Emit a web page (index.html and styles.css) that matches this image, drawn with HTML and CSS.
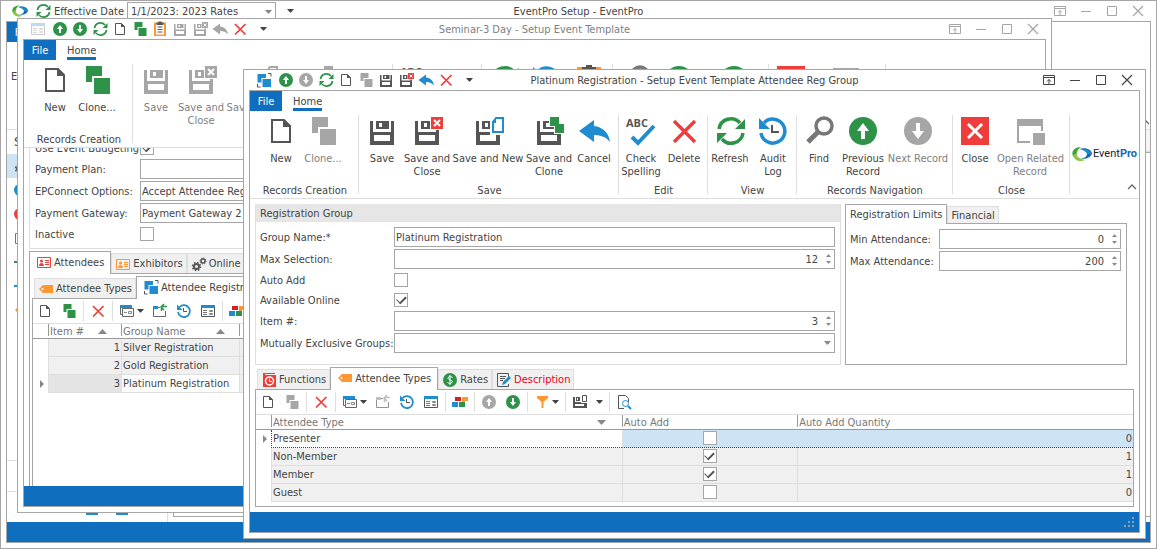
FILE: index.html
```html
<!DOCTYPE html>
<html lang="en">
<head>
<meta charset="utf-8">
<title>EventPro Setup - EventPro</title>
<link rel="stylesheet" href="styles.css">
</head>
<body>
<svg class="sprite" aria-hidden="true">
  <symbol id="new" viewBox="0 0 32 32"><path d="M7 5h12l6 6v16H7z" fill="none" stroke="currentColor" stroke-width="2"/><path d="M18 4v8h8z" fill="currentColor"/></symbol>
  <symbol id="clone" viewBox="0 0 32 32"><path d="M5 2h16v10H11v6H5z" fill="currentColor"/><path d="M13 14h16v16H13z" fill="currentColor"/></symbol>
  <symbol id="save" viewBox="0 0 32 32"><path fill-rule="evenodd" d="M4 6h3v11h18V6h3v24H4zM8 20v6h16v-6zM10 6h13v8H10zM13 8v4h3V8z" fill="currentColor"/></symbol>
  <symbol id="saveclose" viewBox="0 0 32 32"><path fill-rule="evenodd" d="M4 6h3v11h18V6h3v24H4zM8 20v6h16v-6zM10 6h13v8H10zM13 8v4h3V8z" fill="currentColor"/><path d="M19 0h13v15H19z" fill="#fff"/><path d="M20 2h12v12H20z" fill="var(--accent)"/><path d="M23 5l6 6M29 5l-6 6" stroke="#fff" stroke-width="2"/></symbol>
  <symbol id="savenew" viewBox="0 0 32 32"><path fill-rule="evenodd" d="M4 6h3v11h18V6h3v24H4zM8 20v6h16v-6zM10 6h13v8H10zM13 8v4h3V8z" fill="currentColor"/><path d="M18 0h14v20H18z" fill="#fff"/><path d="M24 3h7v14H21V7z" fill="#fff" stroke="var(--accent)" stroke-width="2"/><path d="M20 7l4-4v5h-4z" fill="var(--accent)"/></symbol>
  <symbol id="saveclone" viewBox="0 0 32 32"><path fill-rule="evenodd" d="M4 6h3v11h18V6h3v24H4zM8 20v6h16v-6zM10 6h13v8H10zM13 8v4h3V8z" fill="currentColor"/><path d="M16 0h16v19H21v-7h-5z" fill="#fff"/><path d="M17 2h9v7h-4v2h-5zM22 9h9v9h-9z" fill="var(--accent)"/></symbol>
  <symbol id="cancel" viewBox="0 0 32 32"><path d="M1 16L16 5v6c9 1 15 7 16 16-4-5-9-7-16-7v7z" fill="currentColor"/></symbol>
  <symbol id="spell" viewBox="0 0 32 32"><text x="1" y="12" class="abc">ABC</text><path d="M7 22l6 6L29 11" fill="none" stroke="#1f8bd0" stroke-width="4"/></symbol>
  <symbol id="delete" viewBox="0 0 32 32"><path d="M6 6l21 21M27 6L6 27" stroke="currentColor" stroke-width="3.400"/></symbol>
  <symbol id="refresh" viewBox="0 0 32 32"><path d="M5 14A12 12 0 0 1 26 8M29 18A12 12 0 0 1 8 24" fill="none" stroke="currentColor" stroke-width="3.500"/><path d="M31 4v10H21zM3 28V18h10z" fill="currentColor"/></symbol>
  <symbol id="history" viewBox="0 0 32 32"><path d="M4 18a12 12 0 1 0 3-10" fill="none" stroke="#1f8bd0" stroke-width="3.500"/><path d="M2 3v11h11z" fill="#1f8bd0"/><path d="M15 10v7h7" fill="none" stroke="#555" stroke-width="2"/></symbol>
  <symbol id="find" viewBox="0 0 32 32"><circle cx="21" cy="11" r="8" fill="none" stroke="#777" stroke-width="3.500"/><path d="M15 17L5 27" stroke="#777" stroke-width="5"/></symbol>
  <symbol id="up" viewBox="0 0 32 32"><circle cx="16" cy="16" r="14" fill="currentColor"/><path d="M16 8l6 8h-4v8h-4v-8h-4z" fill="#fff"/></symbol>
  <symbol id="down" viewBox="0 0 32 32"><circle cx="16" cy="16" r="14" fill="currentColor"/><path d="M16 24l6-8h-4V8h-4v8h-4z" fill="#fff"/></symbol>
  <symbol id="close" viewBox="0 0 32 32"><path d="M2 2h28v28H2z" fill="#ee3d3a"/><path d="M9 9l14 14M23 9L9 23" stroke="#fff" stroke-width="3"/></symbol>
  <symbol id="related" viewBox="0 0 32 32"><path d="M3 4h26v12h-2v-5H5v15h11v2H3z" fill="currentColor"/><path d="M19 18h12v12H19z" fill="currentColor"/></symbol>
  <symbol id="paste" viewBox="0 0 32 32"><path d="M4 3h24v27H4z" fill="#ff9634"/><path d="M8 6h16v21H8z" fill="#fff"/><path d="M9 3h4V1h6v2h4v5H9z" fill="#555"/><path d="M11 12h10M11 17h10M11 22h10" stroke="#555" stroke-width="2"/></symbol>
  <symbol id="group" viewBox="0 0 32 32"><path d="M3 4h17v8h-9v9H3zM13 14h17v16H13z" fill="#1f8bd0"/><path d="M24 3h6v6M3 24v6h6" fill="none" stroke="#555" stroke-width="2"/></symbol>
  <symbol id="form" viewBox="0 0 16 16"><path d="M1.500 4.500h13v9h-13z" fill="none" stroke="#555"/><path d="M1 2h14v3H1z" fill="#1f8bd0"/><path d="M3 7.500h4M3 9.500h4M3 11.500h4" stroke="#777"/><path d="M9.500 7.500h3v1h-3zM9.500 10.500h3v1h-3z" fill="none" stroke="#888"/></symbol>
  <symbol id="views" viewBox="0 0 16 16"><path d="M1 2h12v3H1z" fill="#1f8bd0"/><path d="M1.500 4v7.500H3M3.500 5.500h11v8h-11z" fill="none" stroke="#666"/><path d="M9.500 8.500h3v2h-3zM5 9.500h3" fill="none" stroke="#888"/></symbol>
  <symbol id="export" viewBox="0 0 16 16"><path d="M8 4.500H1.500v9h12V8" fill="none" stroke="#666"/><path d="M1 3h5v3H1z" fill="var(--bar)"/><path d="M9.500 8V3.500H15M12 1l-3 3 3 3" fill="none" stroke="var(--arrow)" stroke-width="1.500"/></symbol>
  <symbol id="blocks" viewBox="0 0 16 16"><path d="M3 3h6v4H3z" fill="#d42020"/><path d="M10 3h6v4h-3v3h-3z" fill="#ff9634"/><path d="M0 8h6v5H0z" fill="#1f8bd0"/><path d="M7 8h6v5H7z" fill="#2e9249"/></symbol>
  <symbol id="filter" viewBox="0 0 16 16"><path d="M3 2h11v2L9.500 8v6h-2V8L3 4z" fill="#ff9634"/></symbol>
  <symbol id="layout" viewBox="0 0 16 16"><path fill-rule="evenodd" d="M1 3h2v5h6v1h6v5H1zM3 10v2h9v-2zM4 3h4v4H4zM5 4v2h1V4z" fill="#555"/><path d="M10.500 1.500h4v6h-4z" fill="#fff" stroke="#555"/></symbol>
  <symbol id="preview" viewBox="0 0 16 16"><path d="M12.500 8V4.500l-3-3h-7v13H8" fill="none" stroke="#555"/><circle cx="9.500" cy="9.500" r="3" fill="#fff" stroke="#1f8bd0"/><path d="M12 12l3 3" stroke="#1f8bd0" stroke-width="2"/></symbol>
  <symbol id="tag" viewBox="0 0 16 16"><path d="M1 8l4-4h10v8H5z" fill="#ff9634"/><circle cx="4.500" cy="8" r="1" fill="#fff"/></symbol>
  <symbol id="card" viewBox="0 0 16 16"><path d="M1.500 3.500h13v10h-13z" fill="none" stroke="currentColor"/><circle cx="5.500" cy="7" r="1.500" fill="currentColor"/><path d="M3 12c0-4 5-4 5 0z" fill="currentColor"/><path d="M9 6.500h4M9 8.500h4M9 10.500h4" stroke="currentColor"/></symbol>
  <symbol id="gears" viewBox="0 0 16 16"><circle cx="5.500" cy="10.500" r="2.500" fill="none" stroke="#555" stroke-width="2"/><circle cx="5.500" cy="10.500" r="4" fill="none" stroke="#555" stroke-width="1.500" stroke-dasharray="1.600 1.542"/><circle cx="12" cy="5" r="2" fill="none" stroke="#555" stroke-width="1.500"/><circle cx="12" cy="5" r="3" fill="none" stroke="#555" stroke-dasharray="1.200 1.156"/></symbol>
  <symbol id="functions" viewBox="0 0 16 16"><path d="M2 1h12v1H4v1h11v12H2z" fill="#ee3d3a"/><circle cx="8.500" cy="9" r="4" fill="none" stroke="#fff" stroke-width="1.500"/><path d="M8.500 6.500v3H11" fill="none" stroke="#fff"/></symbol>
  <symbol id="dollar" viewBox="0 0 16 16"><circle cx="8" cy="8" r="7" fill="#2e9249"/><path d="M10.500 5.500C9 4 5.800 4.500 6 6.300S10.300 8 10.300 9.700 7 12 5.500 10.500M8 3v10" fill="none" stroke="#fff"/></symbol>
  <symbol id="note" viewBox="0 0 16 16"><path d="M12.500 5V1.500h-11v13h11V12" fill="none" stroke="#555"/><path d="M4 4.500h6M4 6.500h5M4 8.500h3" stroke="#555"/><path d="M6 13l1-3 6-6 2 2-6 6z" fill="#1f8bd0"/></symbol>
  <symbol id="arrow" viewBox="0 0 7 4"><path d="M0 0h7L4 3.500H3z" fill="currentColor"/></symbol>
  <symbol id="sortup" viewBox="0 0 9 5"><path d="M4.500 0L9 5H0z" fill="#888"/></symbol>
  <symbol id="swoosh" viewBox="0 0 20 16"><path d="M9 1C-2 1-3 13 9 15 3 12 3 5 9 1z" fill="#3fa535"/><path d="M1 9c1 5 5 6 9 6l3-1C8 13 5 11 4 8z" fill="#8fc742"/><path d="M8 3c6-2 12 1 12 5-2 4-6 5-11 5 4-1 6-3 6-5S12 4 8 3z" fill="#1668b3"/><path d="M8 3c6-1 10 2 12 5h-5c0-2-3-4-7-5z" fill="#1f8bd0"/></symbol>
  <symbol id="wpin" viewBox="0 0 12 12"><path d="M.5 1.500h11v9H.5zM0 3.500h12M6 10V5.500M4 7.500l2-2 2 2" fill="none" stroke="currentColor"/></symbol>
  <symbol id="wmin" viewBox="0 0 12 12"><path d="M1 6.500h10" stroke="currentColor"/></symbol>
  <symbol id="wmax" viewBox="0 0 12 12"><path d="M1.500 1.500h9v9h-9z" fill="none" stroke="currentColor"/></symbol>
  <symbol id="wclose" viewBox="0 0 12 12"><path d="M1 1l10 10M11 1L1 11" stroke="currentColor" stroke-width="1.200"/></symbol>
  <symbol id="chevron" viewBox="0 0 10 6"><path d="M1 5l4-4 4 4" fill="none" stroke="#666" stroke-width="1.300"/></symbol>
  <symbol id="rowmark" viewBox="0 0 4 8"><path d="M0 0l4 4-4 4z" fill="#888"/></symbol>
  <symbol id="grip" viewBox="0 0 10 10"><path d="M8 0h2v2H8zM8 4h2v2H8zM4 4h2v2H4zM0 8h2v2H0zM4 8h2v2H4zM8 8h2v2H8z" fill="#8c9caf"/></symbol>
</svg>

<section class="window win-setup">
  <header class="titlebar">
    <div class="qat">
      <svg class="i16 app"><use href="#swoosh"/></svg>
      <svg class="i16 green"><use href="#refresh"/></svg>
      <label for="effective">Effective Date</label>
      <span class="select-wrap date"><select id="effective"><option>1/1/2023: 2023 Rates</option></select><svg class="caret"><use href="#arrow"/></svg></span>
      <svg class="caret dark more"><use href="#arrow"/></svg>
    </div>
    <h1 class="title">EventPro Setup - EventPro</h1>
    <div class="winbtns gray">
      <button aria-label="Pin"><svg><use href="#wpin"/></svg></button><button aria-label="Minimize"><svg><use href="#wmin"/></svg></button><button aria-label="Maximize"><svg><use href="#wmax"/></svg></button><button aria-label="Close"><svg><use href="#wclose"/></svg></button>
    </div>
  </header>
  <div class="frame">
    <div class="tabstrip"><button class="file">File</button></div>
    <div class="setup-ribbon"><span>E</span><svg class="chev"><use href="#chevron"/></svg></div>
    <div class="setup-main">
      <nav class="side">
        <div class="side-head">S</div>
        <ul>
          <li class="on"><svg class="i16"><use href="#gears"/></svg></li>
          <li><span class="dot blue-bg"></span></li>
          <li><span class="dot red-bg"></span></li>
          <li><svg class="i16 blue"><use href="#card"/></svg></li>
          <li><span class="bar green-bg"></span></li>
          <li><span class="bar blue-bg"></span></li>
          <li><svg class="i16"><use href="#tag"/></svg></li>
        </ul>
        <div class="side-row"></div>
        <div class="side-row icons"><span class="bar blue-bg"></span><span class="bar blue-bg"></span></div>
      </nav>
      <div class="setup-pane"><div class="setup-head"></div><div class="setup-box"></div></div>
    </div>
    <footer class="status"></footer>
  </div>
</section>

<section class="window win-template">
  <header class="titlebar">
    <div class="qat">
      <svg class="i16 app faint"><use href="#form"/></svg>
      <svg class="i16 green"><use href="#up"/></svg>
      <svg class="i16 green"><use href="#down"/></svg>
      <svg class="i16 green"><use href="#refresh"/></svg>
      <svg class="i16 dark"><use href="#new"/></svg>
      <svg class="i16 green"><use href="#clone"/></svg>
      <svg class="i16"><use href="#paste"/></svg>
      <svg class="i16 gray"><use href="#save"/></svg>
      <svg class="i16 gray"><use href="#saveclose"/></svg>
      <svg class="i16 gray"><use href="#cancel"/></svg>
      <svg class="i16 red"><use href="#delete"/></svg>
      <svg class="caret dark more"><use href="#arrow"/></svg>
    </div>
    <h1 class="title dim">Seminar-3 Day - Setup Event Template</h1>
    <div class="winbtns gray">
      <button aria-label="Pin"><svg><use href="#wpin"/></svg></button><button aria-label="Minimize"><svg><use href="#wmin"/></svg></button><button aria-label="Maximize"><svg><use href="#wmax"/></svg></button><button aria-label="Close"><svg><use href="#wclose"/></svg></button>
    </div>
  </header>
  <div class="frame">
    <div class="tabstrip"><button class="file">File</button><button class="home">Home</button></div>
    <div class="ribbon">
      <div class="rgroup g-create"><div class="rbtns">
        <button class="rb w42"><svg class="dark"><use href="#new"/></svg>New</button>
        <button class="rb w42"><svg class="green"><use href="#clone"/></svg>Clone...</button>
      </div><div class="cap">Records Creation</div></div>
      <div class="rgroup g-save"><div class="rbtns">
        <button class="rb w44" disabled><svg><use href="#save"/></svg>Save</button>
        <button class="rb w46" disabled><svg><use href="#saveclose"/></svg>Save and<br>Close</button>
        <button class="rb w76" disabled><svg><use href="#savenew"/></svg>Save and New</button>
        <button class="rb w46" disabled aria-label="Save and Clone"><svg><use href="#saveclone"/></svg></button>
        <button class="rb w44" disabled aria-label="Cancel"><svg><use href="#cancel"/></svg></button>
      </div></div>
      <div class="rgroup g-edit"><div class="rbtns">
        <button class="rb w44" aria-label="Check Spelling"><svg><use href="#spell"/></svg></button>
        <button class="rb w42" aria-label="Delete"><svg class="red"><use href="#delete"/></svg></button>
      </div></div>
      <div class="rgroup g-view3"><div class="rbtns">
        <button class="rb w44" aria-label="Refresh"><svg class="green"><use href="#refresh"/></svg></button>
        <button class="rb w42" aria-label="Audit Log"><svg><use href="#history"/></svg></button>
        <button class="rb w42" aria-label="Paste"><svg><use href="#paste"/></svg></button>
      </div></div>
      <div class="rgroup g-nav"><div class="rbtns">
        <button class="rb w44" aria-label="Find"><svg><use href="#find"/></svg></button>
        <button class="rb w44" aria-label="Previous"><svg class="green"><use href="#up"/></svg></button>
        <button class="rb w66" aria-label="Next"><svg class="green"><use href="#down"/></svg></button>
      </div></div>
      <div class="rgroup g-close"><div class="rbtns">
        <button class="rb w44" aria-label="Close"><svg><use href="#close"/></svg></button>
        <button class="rb w66" disabled aria-label="Open Related"><svg><use href="#related"/></svg></button>
      </div></div>
    </div>
    <div class="template-main">
      <div class="template-form">
        <div class="row check"><label for="budget">Use Event Budgeting</label><input type="checkbox" id="budget" checked></div>
        <div class="row"><label for="plan">Payment Plan:</label><input class="text" type="text" id="plan"></div>
        <div class="row"><label for="epc">EPConnect Options:</label><input class="text" type="text" id="epc" value="Accept Attendee Registrations"></div>
        <div class="row"><label for="gateway">Payment Gateway:</label><input class="text" type="text" id="gateway" value="Payment Gateway 2"></div>
        <div class="row check"><label for="inactive">Inactive</label><input type="checkbox" id="inactive"></div>
      </div>
      <div class="tabs">
        <button class="tab on"><svg class="i16 red"><use href="#card"/></svg>Attendees</button>
        <button class="tab"><svg class="i16 orange"><use href="#card"/></svg>Exhibitors</button>
        <button class="tab"><svg class="i16"><use href="#gears"/></svg>Online</button>
      </div>
      <div class="panel nest">
        <div class="tabs inset">
          <button class="tab"><svg class="i16"><use href="#tag"/></svg>Attendee Types</button>
          <button class="tab on"><svg class="i16"><use href="#group"/></svg>Attendee Registration Groups</button>
        </div>
        <div class="panel">
          <div class="toolbar">
            <button aria-label="New"><svg class="i16 dark"><use href="#new"/></svg></button>
            <button aria-label="Clone"><svg class="i16 green"><use href="#clone"/></svg></button>
            <i class="sep"></i>
            <button aria-label="Delete"><svg class="i16 red"><use href="#delete"/></svg></button>
            <i class="sep"></i>
            <button aria-label="Views" class="drop"><svg class="i16"><use href="#views"/></svg><svg class="caret dark"><use href="#arrow"/></svg></button>
            <button aria-label="Export"><svg class="i16 export-on"><use href="#export"/></svg></button>
            <button aria-label="History"><svg class="i16"><use href="#history"/></svg></button>
            <button aria-label="Form"><svg class="i16"><use href="#form"/></svg></button>
            <i class="sep"></i>
            <button aria-label="Colors"><svg class="i16"><use href="#blocks"/></svg></button>
          </div>
          <table class="grid groups">
            <colgroup><col class="mark"><col class="c-item"><col class="c-name"><col></colgroup>
            <thead><tr><th></th><th>Item #<svg class="sort"><use href="#sortup"/></svg></th><th>Group Name<svg class="sort"><use href="#sortup"/></svg></th><th></th></tr></thead>
            <tbody>
              <tr><td></td><td class="num">1</td><td>Silver Registration</td><td></td></tr>
              <tr><td></td><td class="num">2</td><td>Gold Registration</td><td></td></tr>
              <tr class="cur"><td><svg class="rowmark"><use href="#rowmark"/></svg></td><td class="num">3</td><td class="focus">Platinum Registration</td><td></td></tr>
            </tbody>
          </table>
        </div>
      </div>
    </div>
    <footer class="status"></footer>
  </div>
</section>

<section class="window win-group">
  <header class="titlebar">
    <div class="qat">
      <svg class="i16 app"><use href="#group"/></svg>
      <svg class="i16 green"><use href="#up"/></svg>
      <svg class="i16 gray"><use href="#down"/></svg>
      <svg class="i16 green"><use href="#refresh"/></svg>
      <svg class="i16 dark"><use href="#new"/></svg>
      <svg class="i16 gray"><use href="#clone"/></svg>
      <svg class="i16 dark"><use href="#save"/></svg>
      <svg class="i16 dark a-red"><use href="#saveclose"/></svg>
      <svg class="i16 blue"><use href="#cancel"/></svg>
      <svg class="i16 red"><use href="#delete"/></svg>
      <svg class="caret dark more"><use href="#arrow"/></svg>
    </div>
    <h1 class="title">Platinum Registration - Setup Event Template Attendee Reg Group</h1>
    <div class="winbtns">
      <button aria-label="Pin"><svg><use href="#wpin"/></svg></button><button aria-label="Minimize"><svg><use href="#wmin"/></svg></button><button aria-label="Maximize"><svg><use href="#wmax"/></svg></button><button aria-label="Close"><svg><use href="#wclose"/></svg></button>
    </div>
  </header>
  <div class="frame">
    <div class="tabstrip"><button class="file">File</button><button class="home">Home</button></div>
    <div class="ribbon">
      <div class="rgroup g-create"><div class="rbtns">
        <button class="rb w42"><svg class="dark"><use href="#new"/></svg>New</button>
        <button class="rb w42" disabled><svg><use href="#clone"/></svg>Clone...</button>
      </div><div class="cap">Records Creation</div></div>
      <div class="rgroup g-save"><div class="rbtns">
        <button class="rb w44"><svg class="dark"><use href="#save"/></svg>Save</button>
        <button class="rb w46"><svg class="dark a-red"><use href="#saveclose"/></svg>Save and<br>Close</button>
        <button class="rb w76"><svg class="dark a-blue"><use href="#savenew"/></svg>Save and New</button>
        <button class="rb w46"><svg class="dark a-green"><use href="#saveclone"/></svg>Save and<br>Clone</button>
        <button class="rb w44"><svg class="blue"><use href="#cancel"/></svg>Cancel</button>
      </div><div class="cap">Save</div></div>
      <div class="rgroup g-edit"><div class="rbtns">
        <button class="rb w44"><svg><use href="#spell"/></svg>Check<br>Spelling</button>
        <button class="rb w42"><svg class="red"><use href="#delete"/></svg>Delete</button>
      </div><div class="cap">Edit</div></div>
      <div class="rgroup g-view"><div class="rbtns">
        <button class="rb w44"><svg class="green"><use href="#refresh"/></svg>Refresh</button>
        <button class="rb w42"><svg><use href="#history"/></svg>Audit<br>Log</button>
      </div><div class="cap">View</div></div>
      <div class="rgroup g-nav"><div class="rbtns">
        <button class="rb w44"><svg><use href="#find"/></svg>Find</button>
        <button class="rb w44"><svg class="green"><use href="#up"/></svg>Previous<br>Record</button>
        <button class="rb w66" disabled><svg><use href="#down"/></svg>Next Record</button>
      </div><div class="cap">Records Navigation</div></div>
      <div class="rgroup g-close"><div class="rbtns">
        <button class="rb w44"><svg><use href="#close"/></svg>Close</button>
        <button class="rb w66" disabled><svg><use href="#related"/></svg>Open Related<br>Record</button>
      </div><div class="cap">Close</div></div>
      <div class="endcap">
        <div class="brand"><svg class="swoosh"><use href="#swoosh"/></svg><span>Event<b>Pro</b></span></div>
        <svg class="chev"><use href="#chevron"/></svg>
      </div>
    </div>
    <div class="group-main">
      <div class="top">
        <fieldset class="regbox">
          <legend>Registration Group</legend>
          <div class="row"><label for="gname">Group Name:*</label><input class="text" type="text" id="gname" value="Platinum Registration"></div>
          <div class="row"><label for="maxsel">Max Selection:</label><span class="spin"><input type="text" id="maxsel" value="12"><span class="arrows"><svg class="caret flip"><use href="#arrow"/></svg><svg class="caret"><use href="#arrow"/></svg></span></span></div>
          <div class="row check"><label for="autoadd">Auto Add</label><input type="checkbox" id="autoadd"></div>
          <div class="row check"><label for="online">Available Online</label><input type="checkbox" id="online" checked></div>
          <div class="row"><label for="itemno">Item #:</label><span class="spin"><input type="text" id="itemno" value="3"><span class="arrows"><svg class="caret flip"><use href="#arrow"/></svg><svg class="caret"><use href="#arrow"/></svg></span></span></div>
          <div class="row"><label for="mutual">Mutually Exclusive Groups:</label><span class="select-wrap"><select id="mutual"><option></option></select><svg class="caret"><use href="#arrow"/></svg></span></div>
        </fieldset>
        <div class="limits">
          <div class="tabs"><button class="tab on">Registration Limits</button><button class="tab">Financial</button></div>
          <div class="panel">
            <div class="row"><label for="minatt">Min Attendance:</label><span class="spin"><input type="text" id="minatt" value="0"><span class="arrows"><svg class="caret flip"><use href="#arrow"/></svg><svg class="caret"><use href="#arrow"/></svg></span></span></div>
            <div class="row"><label for="maxatt">Max Attendance:</label><span class="spin"><input type="text" id="maxatt" value="200"><span class="arrows"><svg class="caret flip"><use href="#arrow"/></svg><svg class="caret"><use href="#arrow"/></svg></span></span></div>
          </div>
        </div>
      </div>
      <div class="tabs inset">
        <button class="tab"><svg class="i16"><use href="#functions"/></svg>Functions</button>
        <button class="tab on"><svg class="i16"><use href="#tag"/></svg>Attendee Types</button>
        <button class="tab"><svg class="i16"><use href="#dollar"/></svg>Rates</button>
        <button class="tab alert"><svg class="i16"><use href="#note"/></svg>Description</button>
      </div>
      <div class="panel fill">
        <div class="toolbar">
          <button aria-label="New"><svg class="i16 dark"><use href="#new"/></svg></button>
          <button aria-label="Clone"><svg class="i16 gray"><use href="#clone"/></svg></button>
          <i class="sep"></i>
          <button aria-label="Delete"><svg class="i16 red"><use href="#delete"/></svg></button>
          <i class="sep"></i>
          <button aria-label="Views" class="drop"><svg class="i16"><use href="#views"/></svg><svg class="caret dark"><use href="#arrow"/></svg></button>
          <button aria-label="Export"><svg class="i16 export-off"><use href="#export"/></svg></button>
          <button aria-label="History"><svg class="i16"><use href="#history"/></svg></button>
          <button aria-label="Form"><svg class="i16"><use href="#form"/></svg></button>
          <i class="sep"></i>
          <button aria-label="Colors"><svg class="i16"><use href="#blocks"/></svg></button>
          <i class="sep"></i>
          <button aria-label="Move up"><svg class="i16 gray"><use href="#up"/></svg></button>
          <button aria-label="Move down"><svg class="i16 green"><use href="#down"/></svg></button>
          <i class="sep"></i>
          <button aria-label="Filter" class="drop"><svg class="i16"><use href="#filter"/></svg><svg class="caret dark"><use href="#arrow"/></svg></button>
          <i class="sep"></i>
          <button aria-label="Layout" class="drop wide"><svg class="i16"><use href="#layout"/></svg><svg class="caret dark"><use href="#arrow"/></svg></button>
          <i class="sep"></i>
          <button aria-label="Preview"><svg class="i16"><use href="#preview"/></svg></button>
        </div>
        <table class="grid types">
          <colgroup><col class="mark"><col class="c-type"><col class="c-auto"><col></colgroup>
          <thead><tr><th></th><th>Attendee Type<svg class="sort far flip"><use href="#sortup"/></svg></th><th>Auto Add</th><th>Auto Add Quantity</th></tr></thead>
          <tbody>
            <tr class="sel"><td><svg class="rowmark"><use href="#rowmark"/></svg></td><td class="focus">Presenter</td><td class="mid"><input type="checkbox" aria-label="Presenter auto add"></td><td class="num">0</td></tr>
            <tr><td></td><td>Non-Member</td><td class="mid"><input type="checkbox" aria-label="Non-Member auto add" checked></td><td class="num">1</td></tr>
            <tr><td></td><td>Member</td><td class="mid"><input type="checkbox" aria-label="Member auto add" checked></td><td class="num">1</td></tr>
            <tr><td></td><td>Guest</td><td class="mid"><input type="checkbox" aria-label="Guest auto add"></td><td class="num">0</td></tr>
          </tbody>
        </table>
      </div>
    </div>
    <footer class="status"><svg class="grip"><use href="#grip"/></svg></footer>
  </div>
</section>
</body>
</html>
```
FILE: styles.css
```css
:root {
  --line: #a6a6a6;
  --soft: #dedede;
  --brand: #106ebe;
  --text: #444;
  --accent: #a6a6a6;
}
* { box-sizing: border-box; }
html, body { height: 100%; }
body {
  margin: 0;
  background: #fff;
  color: var(--text);
  font: 11px/13px "DejaVu Sans Condensed", Tahoma, sans-serif;
  overflow: hidden;
}
button, input, select { font: inherit; color: inherit; margin: 0; padding: 0; border: 0; background: none; border-radius: 0; }
svg { display: block; flex: none; }
.sprite { display: none; }

.dark { color: #555; }
.gray { color: #a6a6a6; }
.green { color: #2e9249; }
.blue { color: #1f8bd0; }
.red { color: #ee3d3a; }
.orange { color: #ff9634; }
.blue-bg { background: #1f8bd0; }
.red-bg { background: #ee3d3a; }
.green-bg { background: #2e9249; }
.a-red { --accent: #ee3d3a; }
.a-blue { --accent: #1f8bd0; }
.a-green { --accent: #2e9249; }
.export-on { --bar: #1f8bd0; --arrow: #2e9249; }
.export-off { --bar: #a6a6a6; --arrow: #a6a6a6; opacity: 0.7; }
.faint { opacity: 0.3; }
.i16 { width: 16px; height: 16px; }
.abc { font: bold 11px "Open Sans", sans-serif; fill: #555; }

/* windows */
.window {
  position: absolute;
  display: flex;
  flex-direction: column;
  padding: 0 5px 5px;
  border: 1px solid var(--line);
  background: #fff;
}
.win-setup { inset: 0; }
.win-template { inset: 18px 105px 36px 17px; }
.win-group { inset: 69px 11px 10px 243px; }
.titlebar {
  display: grid;
  grid-template-columns: minmax(0, 1fr) auto minmax(0, 1fr);
  align-items: center;
  height: 20px;
  flex: none;
}
.title { margin: 0; font-size: 11px; font-weight: normal; white-space: nowrap; }
.dim { color: #808080; }
.qat { display: flex; align-items: center; gap: 4px; padding-left: 7px; white-space: nowrap; }
.app { margin-right: 2px; }
.caret { width: 7px; height: 4px; color: #888; }
.caret.dark { color: #444; }
.flip { transform: scaleY(-1); }
.more { margin-left: 8px; }
.winbtns { display: flex; justify-content: flex-end; gap: 14px; padding-right: 7px; }
.winbtns svg { width: 12px; height: 12px; }
.frame {
  flex: 1;
  min-height: 0;
  display: flex;
  flex-direction: column;
  border: 1px solid var(--line);
}
.status { flex: none; height: 20px; background: var(--brand); display: flex; justify-content: flex-end; padding: 5px; }
.grip { width: 10px; height: 10px; }

/* ribbon */
.tabstrip { display: flex; gap: 11px; height: 20px; flex: none; }
.file { width: 32px; background: var(--brand); color: #fff; }
.home { border-bottom: 3px solid var(--brand); padding-top: 3px; }
.ribbon { display: flex; flex: none; height: 88px; padding: 4px 0; border-bottom: 1px solid var(--soft); overflow: hidden; }
.rgroup {
  flex: none;
  display: flex;
  flex-direction: column;
  justify-content: space-between;
  height: 82px;
  padding-left: 1px;
  text-align: center;
  background: linear-gradient(var(--soft), var(--soft)) right top / 1px 79px no-repeat;
}
.rbtns { display: flex; }
.rb { flex: none; align-self: flex-start; white-space: nowrap; text-align: center; }
.rb svg { width: 32px; height: 32px; margin: 0 auto 5px; }
.rb:disabled { color: #808080; }
.rb:disabled svg { color: #a6a6a6; }
.w42 { width: 42px; }
.w44 { width: 44px; }
.w46 { width: 46px; }
.w66 { width: 66px; }
.w76 { width: 76px; }
.cap { white-space: nowrap; }
.g-create { width: 109px; }
.g-create .rbtns { padding-left: 9px; }
.g-save { width: 260px; }
.g-edit, .g-view { width: 89px; padding-left: 0; }
.g-view3 { width: 131px; padding-left: 0; }
.g-nav { width: 156px; padding-left: 0; }
.g-close { width: 117px; padding-left: 0; }
.endcap { flex: 1; display: flex; flex-direction: column; justify-content: space-between; padding-top: 31px; }
.brand { display: flex; align-items: center; gap: 1px; padding-left: 2px; font: 11px/16px Roboto, sans-serif; color: #222; }
.brand b { color: #1668b3; }
.swoosh { width: 20px; height: 16px; }
.chev { width: 10px; height: 6px; margin: 0 2px 4px auto; }

/* form parts */
.row { display: grid; align-items: center; height: 22px; white-space: nowrap; }
.row.check { height: 20px; }
.text, .spin, .select-wrap { height: 20px; border: 1px solid var(--line); background: #fff; min-width: 0; }
.text { width: 100%; padding: 0 1px; }
.spin { display: flex; align-items: center; }
.spin input { flex: 1; min-width: 0; text-align: right; padding-right: 8px; }
.arrows { display: flex; flex-direction: column; gap: 4px; padding-right: 3px; }
.arrows .caret { width: 5px; height: 3px; }
.select-wrap { display: flex; align-items: center; padding-right: 3px; }
.select-wrap select { appearance: none; flex: 1; min-width: 0; outline: 0; }
input[type="checkbox"] {
  appearance: none;
  width: 14px;
  height: 14px;
  border: 1px solid var(--line);
  background: #fff;
  display: inline-grid;
  place-items: center;
}
input[type="checkbox"]:checked::after {
  content: "";
  width: 8px;
  height: 4px;
  border: solid #555;
  border-width: 0 0 2px 1px;
  transform: translateY(-1px) rotate(-45deg);
}

/* tabs and panels */
.tabs { display: flex; align-items: flex-end; height: 22px; flex: none; white-space: nowrap; }
.tabs.inset { padding-left: 2px; }
.tab {
  display: flex;
  align-items: center;
  gap: 2px;
  height: 20px;
  padding: 0 3px;
  background: #f0f0f0;
  border: 1px solid var(--soft);
  border-bottom: 0;
  flex: none;
}
.tab.on {
  height: 23px;
  margin-bottom: -1px;
  background: #fff;
  border: 1px solid var(--line);
  border-bottom: 0;
  position: relative;
  padding: 0 6px 2px;
}
.alert { color: #e8001c; }
.panel { border: 1px solid var(--line); min-height: 0; flex: 1; }
.toolbar { display: flex; align-items: center; height: 25px; padding-left: 4px; gap: 8px; border-bottom: 1px solid var(--soft); }
.toolbar button { flex: none; }
.toolbar .sep { width: 1px; height: 20px; margin: 0 -2px; background: var(--soft); }
.toolbar .drop { display: flex; align-items: center; gap: 2px; }
.toolbar .drop .caret { width: 7px; }
.toolbar .wide { gap: 8px; }

/* data grids */
.grid { width: 100%; table-layout: fixed; border-collapse: separate; border-spacing: 0; }
.grid th { height: 15px; padding: 0 2px; font-weight: normal; text-align: left; color: #777; border-bottom: 1px solid #999; white-space: nowrap; background: linear-gradient(#999, #999) left top / 1px 12px no-repeat; }
.grid th:first-child { background: none; }
.grid td { height: 18px; padding: 0 1px; background: #f0f0f0; border-left: 1px solid var(--soft); border-bottom: 1px solid var(--soft); white-space: nowrap; }
.grid td:first-child { background: #fff; border-color: #fff; padding: 0; }
.grid td.focus { background: #fff; }
.grid .num { text-align: right; padding-right: 1px; }
.grid .mid { text-align: center; vertical-align: top; line-height: 0; padding-top: 1px; }
.grid .sel td { background: #cde4f7; border-bottom: 1px dotted #444; }
.grid .sel td.focus { background: #fff; border-left: 1px dotted #444; }
.grid .sel td:first-child { background: #fff; border-color: #fff; }
.grid .cur .num { background: #e4e4e4; }
.mark { width: 15px; }
.rowmark { width: 4px; height: 8px; margin-left: 6px; }
.sort { float: right; width: 9px; height: 5px; margin: 4px 12px 0 0; }
.sort.far { margin-right: 14px; }

/* registration group window */
.group-main { flex: 1; min-height: 0; display: flex; flex-direction: column; padding: 5px; }
.top { display: grid; grid-template-columns: minmax(0, 1fr) 282px; gap: 4px; padding-right: 7px; margin-bottom: 2px; }
.regbox { margin: 0; min-width: 0; padding: 0 5px 10px 4px; border: 1px solid var(--soft); border-top: 0; }
.regbox legend { float: left; width: calc(100% + 9px); margin: 0 -5px 4px -4px; padding: 1px 4px 0; line-height: 17px; background: #e6e6e6; }
.regbox .row { clear: both; grid-template-columns: 134px minmax(0, 1fr); }
.limits { display: flex; flex-direction: column; }
.limits .tabs { height: 19px; }
.limits .tab { height: 17px; }
.limits .tab.on { height: 20px; padding: 0 4px; }
.limits .panel { padding: 4px 5px 4px 4px; }
.limits .row { grid-template-columns: 89px minmax(0, 1fr); }
.c-type { width: 40%; }
.c-auto { width: 20%; }

/* event template window */
.template-main { flex: 1; min-height: 0; overflow: hidden; display: flex; flex-direction: column; padding: 0 5px; }
.template-form { margin-top: -10px; margin-bottom: 2px; padding: 0 5px 4px; border: 1px solid var(--soft); border-top: 0; flex: none; }
.template-form .row { grid-template-columns: 105px minmax(0, 1fr); }
.nest { display: flex; flex-direction: column; padding: 2px 2px 0; border-bottom: 0; }
.nest .panel { border-bottom: 0; }
.c-item { width: 73px; }
.c-name { width: 118px; }

/* main setup window */
.date { width: 149px; height: 19px; border-bottom: 0; padding-left: 3px; }
.win-setup .qat { gap: 3px; padding-left: 6px; }
.win-setup .app { margin-right: 4px; }
.setup-ribbon { flex: none; height: 88px; padding: 28px 0 0 4px; border-bottom: 1px solid var(--soft); display: flex; align-items: flex-start; }
.setup-ribbon .chev { align-self: flex-end; margin-right: 0; }
.setup-main { flex: 1; display: flex; min-height: 0; }
.side { width: 161px; display: flex; flex-direction: column; border-right: 1px solid var(--soft); }
.side-head { padding: 5px 7px; height: 24px; font-size: 13px; }
.side ul { list-style: none; margin: 0; padding: 0; flex: 1; }
.side li { height: 24px; padding-left: 7px; display: flex; align-items: center; }
.side .on { background: #cde4f7; }
.dot { width: 12px; height: 12px; border-radius: 6px; }
.bar { width: 12px; height: 2px; }
.side-row { height: 31px; border-top: 1px solid var(--soft); }
.icons { display: flex; align-items: center; gap: 18px; padding: 13px 0 0 79px; }
.setup-pane { flex: 1; display: flex; flex-direction: column; padding-bottom: 5px; }
.setup-head { height: 22px; background: #f5f5f5; border-bottom: 1px solid var(--soft); }
.setup-box { flex: 1; margin-left: 5px; border: 1px solid var(--line); border-right: 0; }
```
